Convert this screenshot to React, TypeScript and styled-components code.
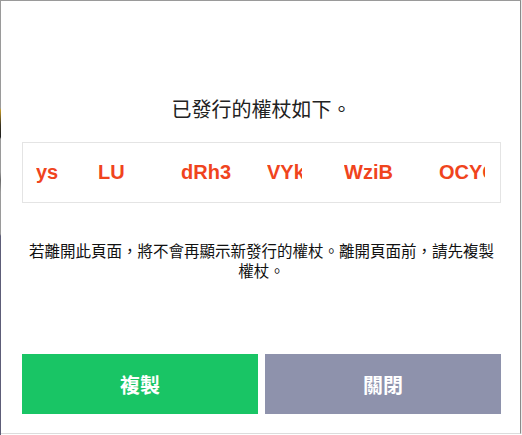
import React from "react";
import styled, { createGlobalStyle } from "styled-components";

const GlobalStyle = createGlobalStyle`
  html, body {
    margin: 0;
    padding: 0;
    background: #ffffff;
  }
  body {
    font-family: "Noto Sans CJK TC", "Noto Sans", sans-serif;
  }
`;

const Screen = styled.div`
  display: flex;
  width: 522px;
  height: 435px;
  overflow: hidden;
`;

// the page behind the dialog shows through on the far left
const Backdrop = styled.div`
  width: 1px;
  flex-shrink: 0;
  background: linear-gradient(
    to bottom,
    #9a9a9a 0px,
    #9a9a9a 108px,
    #c49a2a 110px,
    #3a3320 125px,
    #1e1e1e 137px,
    #9a9a9a 139px,
    #9a9a9a 172px,
    #6a6a6a 180px,
    #9a9a9a 192px,
    #9a9a9a 234px,
    #5d5d78 236px,
    #5d5d78 100%
  );
`;

const Dialog = styled.div`
  width: 520px;
  height: 434px;
  box-sizing: border-box;
  background: #ffffff;
  border-top: 1px solid #9a9a9a;
  border-right: 1px solid #8a8a8a;
  border-bottom: 1px solid #dcdcdc;
  box-shadow: 1px 0 0 #ececec;
  padding: 0 19px 0 21px;
  display: flex;
  flex-direction: column;
`;

const Title = styled.h2`
  margin: 94px 0 0;
  font-size: 20px;
  line-height: 28px;
  font-weight: 400;
  color: #222222;
  text-align: center;
`;

const TokenBox = styled.div`
  margin-top: 19px;
  height: 61px;
  box-sizing: border-box;
  border: 1px solid #e4e4e4;
  padding-left: 13px;
  display: flex;
  align-items: center;
  overflow: hidden;
`;

const Token = styled.span<{ $w: number; $gap: number; $end?: boolean }>`
  flex-shrink: 0;
  width: ${({ $w }) => $w}px;
  margin-left: ${({ $gap }) => $gap}px;
  overflow: hidden;
  white-space: nowrap;
  display: flex;
  justify-content: ${({ $end }) => ($end ? "flex-end" : "flex-start")};
  font-family: "Liberation Sans", Arial, sans-serif;
  font-weight: 700;
  font-size: 20px;
  color: #f0441d;
`;

const Notice = styled.p`
  margin: 37px 0 0;
  font-size: 15.5px;
  line-height: 20px;
  color: #111111;
  text-align: center;
`;

const Actions = styled.div`
  margin-top: 74px;
  display: grid;
  grid-template-columns: 1fr 1fr;
  gap: 7px;
`;

const ActionButton = styled.button<{ $tone: "primary" | "muted" }>`
  height: 60px;
  border: none;
  border-radius: 0;
  background: ${({ $tone }) => ($tone === "primary" ? "#19c565" : "#8e92ac")};
  color: #ffffff;
  font-family: "Noto Sans CJK TC", sans-serif;
  font-size: 20px;
  font-weight: 700;
  cursor: pointer;
`;

const tokens = [
  { text: "ys", w: 23, gap: 0 },
  { text: "LU", w: 27, gap: 39 },
  { text: "xdRh3", w: 50, gap: 56, end: true },
  { text: "VYkz", w: 35, gap: 36 },
  { text: "WziB", w: 50, gap: 42 },
  { text: "OCYG", w: 46, gap: 45 },
];

const App: React.FC = () => {
  return (
    <>
      <GlobalStyle />
      <Screen>
        <Backdrop />
        <Dialog>
          <Title>已發行的權杖如下。</Title>
          <TokenBox>
            {tokens.map((t, i) => (
              <Token key={i} $w={t.w} $gap={t.gap} $end={t.end}>
                {t.text}
              </Token>
            ))}
          </TokenBox>
          <Notice>
            若離開此頁面，將不會再顯示新發行的權杖。離開頁面前，請先複製權杖。
          </Notice>
          <Actions>
            <ActionButton $tone="primary">複製</ActionButton>
            <ActionButton $tone="muted">關閉</ActionButton>
          </Actions>
        </Dialog>
      </Screen>
    </>
  );
};

export default App;
